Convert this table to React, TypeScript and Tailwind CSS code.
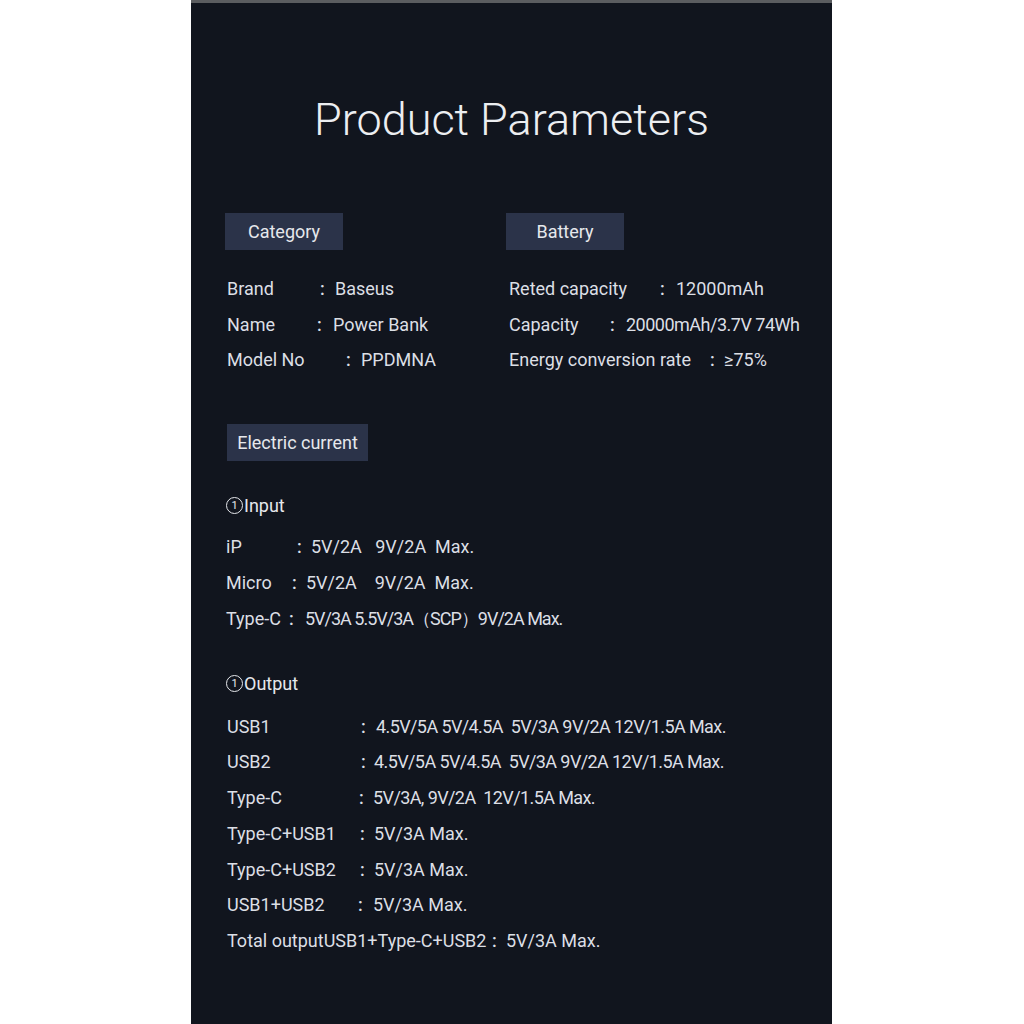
import React from "react";

type Row = { label: string; lw: number; cw: number; value: string; tight?: string };

const categoryRows: Row[] = [
  { label: "Brand", lw: 93, cw: 15, value: "Baseus" },
  { label: "Name", lw: 90, cw: 16, value: "Power Bank" },
  { label: "Model No", lw: 119, cw: 15, value: "PPDMNA" },
];

const batteryRows: Row[] = [
  { label: "Reted capacity", lw: 151, cw: 16, value: "12000mAh" },
  { label: "Capacity", lw: 101, cw: 16, value: "20000mAh/3.7V 74Wh", tight: "tracking-[-0.5px]" },
  { label: "Energy conversion rate", lw: 201, cw: 14, value: "≥75%" },
];

const inputRows: Row[] = [
  { label: "iP", lw: 71, cw: 14, value: "5V/2A\u00a0\u00a0\u00a09V/2A\u00a0\u00a0Max." },
  { label: "Micro", lw: 66, cw: 14, value: "5V/2A\u00a0\u00a0\u00a0\u00a09V/2A\u00a0\u00a0Max." },
  { label: "Type-C", lw: 63, cw: 16, value: "5V/3A 5.5V/3A（SCP）9V/2A Max.", tight: "tracking-[-1px]" },
];

const outputRows: Row[] = [
  { label: "USB1", lw: 134, cw: 15, value: "4.5V/5A 5V/4.5A\u00a0\u00a05V/3A 9V/2A 12V/1.5A Max.", tight: "tracking-[-0.6px]" },
  { label: "USB2", lw: 134, cw: 13, value: "4.5V/5A 5V/4.5A\u00a0\u00a05V/3A 9V/2A 12V/1.5A Max.", tight: "tracking-[-0.6px]" },
  { label: "Type-C", lw: 132, cw: 14, value: "5V/3A, 9V/2A\u00a0\u00a012V/1.5A Max.", tight: "tracking-[-0.6px]" },
  { label: "Type-C+USB1", lw: 133, cw: 14, value: "5V/3A Max." },
  { label: "Type-C+USB2", lw: 133, cw: 14, value: "5V/3A Max." },
  { label: "USB1+USB2", lw: 131, cw: 15, value: "5V/3A Max." },
  { label: "Total outputUSB1+Type-C+USB2", lw: 265, cw: 14, value: "5V/3A Max." },
];

function Rows({ rows, lh }: { rows: Row[]; lh: string }) {
  return (
    <div className="flex flex-col">
      {rows.map((r, i) => (
        <div key={i} className={`flex whitespace-nowrap ${lh}`}>
          <span className="shrink-0" style={{ width: r.lw }}>
            {r.label}
          </span>
          <span className="shrink-0 font-medium" style={{ width: r.cw }}>
            :
          </span>
          <span className={r.tight ?? ""}>{r.value}</span>
        </div>
      ))}
    </div>
  );
}

function Tag({ children, w }: { children: React.ReactNode; w: string }) {
  return (
    <div
      className={`${w} h-[37px] bg-[#2b3349] flex items-center justify-center text-[18px] text-[#e6e8ec]`}
    >
      {children}
    </div>
  );
}

function Circled({ text }: { text: string }) {
  return (
    <div className="flex items-center h-[36px] text-[18px] text-[#e6e8ec]">
      <span
        className="inline-flex items-center justify-center w-[17px] h-[17px] rounded-full border-[1.5px] border-[#e6e8ec] text-[11px] leading-none mr-[1px]"
      >
        1
      </span>
      <span>{text}</span>
    </div>
  );
}

export default function App() {
  return (
    <div className="w-[1024px] h-[1024px] bg-white overflow-hidden">
      <div
        className="ml-[191px] w-[641px] h-[1024px] bg-[#11151e] text-[#dcdfe5] text-[18px]"
        style={{ fontFamily: "Roboto, 'DejaVu Sans', sans-serif" }}
      >
        <div className="h-[3px] bg-[#5b5d60]" />
        <h1 className="pt-[89px] h-[145px] text-center text-[45px] leading-[56px] font-light text-[#eceef1]">
          Product Parameters
        </h1>
        <div className="mt-[65px] flex pl-[34px]">
          <div className="w-[281px]">
            <Tag w="w-[118px]">Category</Tag>
            <div className="mt-[21px] pl-[2px]">
              <Rows rows={categoryRows} lh="leading-[35.6px]" />
            </div>
          </div>
          <div>
            <Tag w="w-[118px]">Battery</Tag>
            <div className="mt-[21px] pl-[3px]">
              <Rows rows={batteryRows} lh="leading-[35.6px]" />
            </div>
          </div>
        </div>
        <div className="mt-[46px] pl-[36px]">
          <Tag w="w-[141px]">Electric current</Tag>
        </div>
        <div className="pl-[35px]">
          <div className="mt-[27px]">
            <Circled text="Input" />
          </div>
          <div className="mt-[5px]">
            <Rows rows={inputRows} lh="leading-[36px]" />
          </div>
          <div className="mt-[29px]">
            <Circled text="Output" />
          </div>
          <div className="mt-[7px] pl-[1px]">
            <Rows rows={outputRows} lh="leading-[35.7px]" />
          </div>
        </div>
      </div>
    </div>
  );
}
